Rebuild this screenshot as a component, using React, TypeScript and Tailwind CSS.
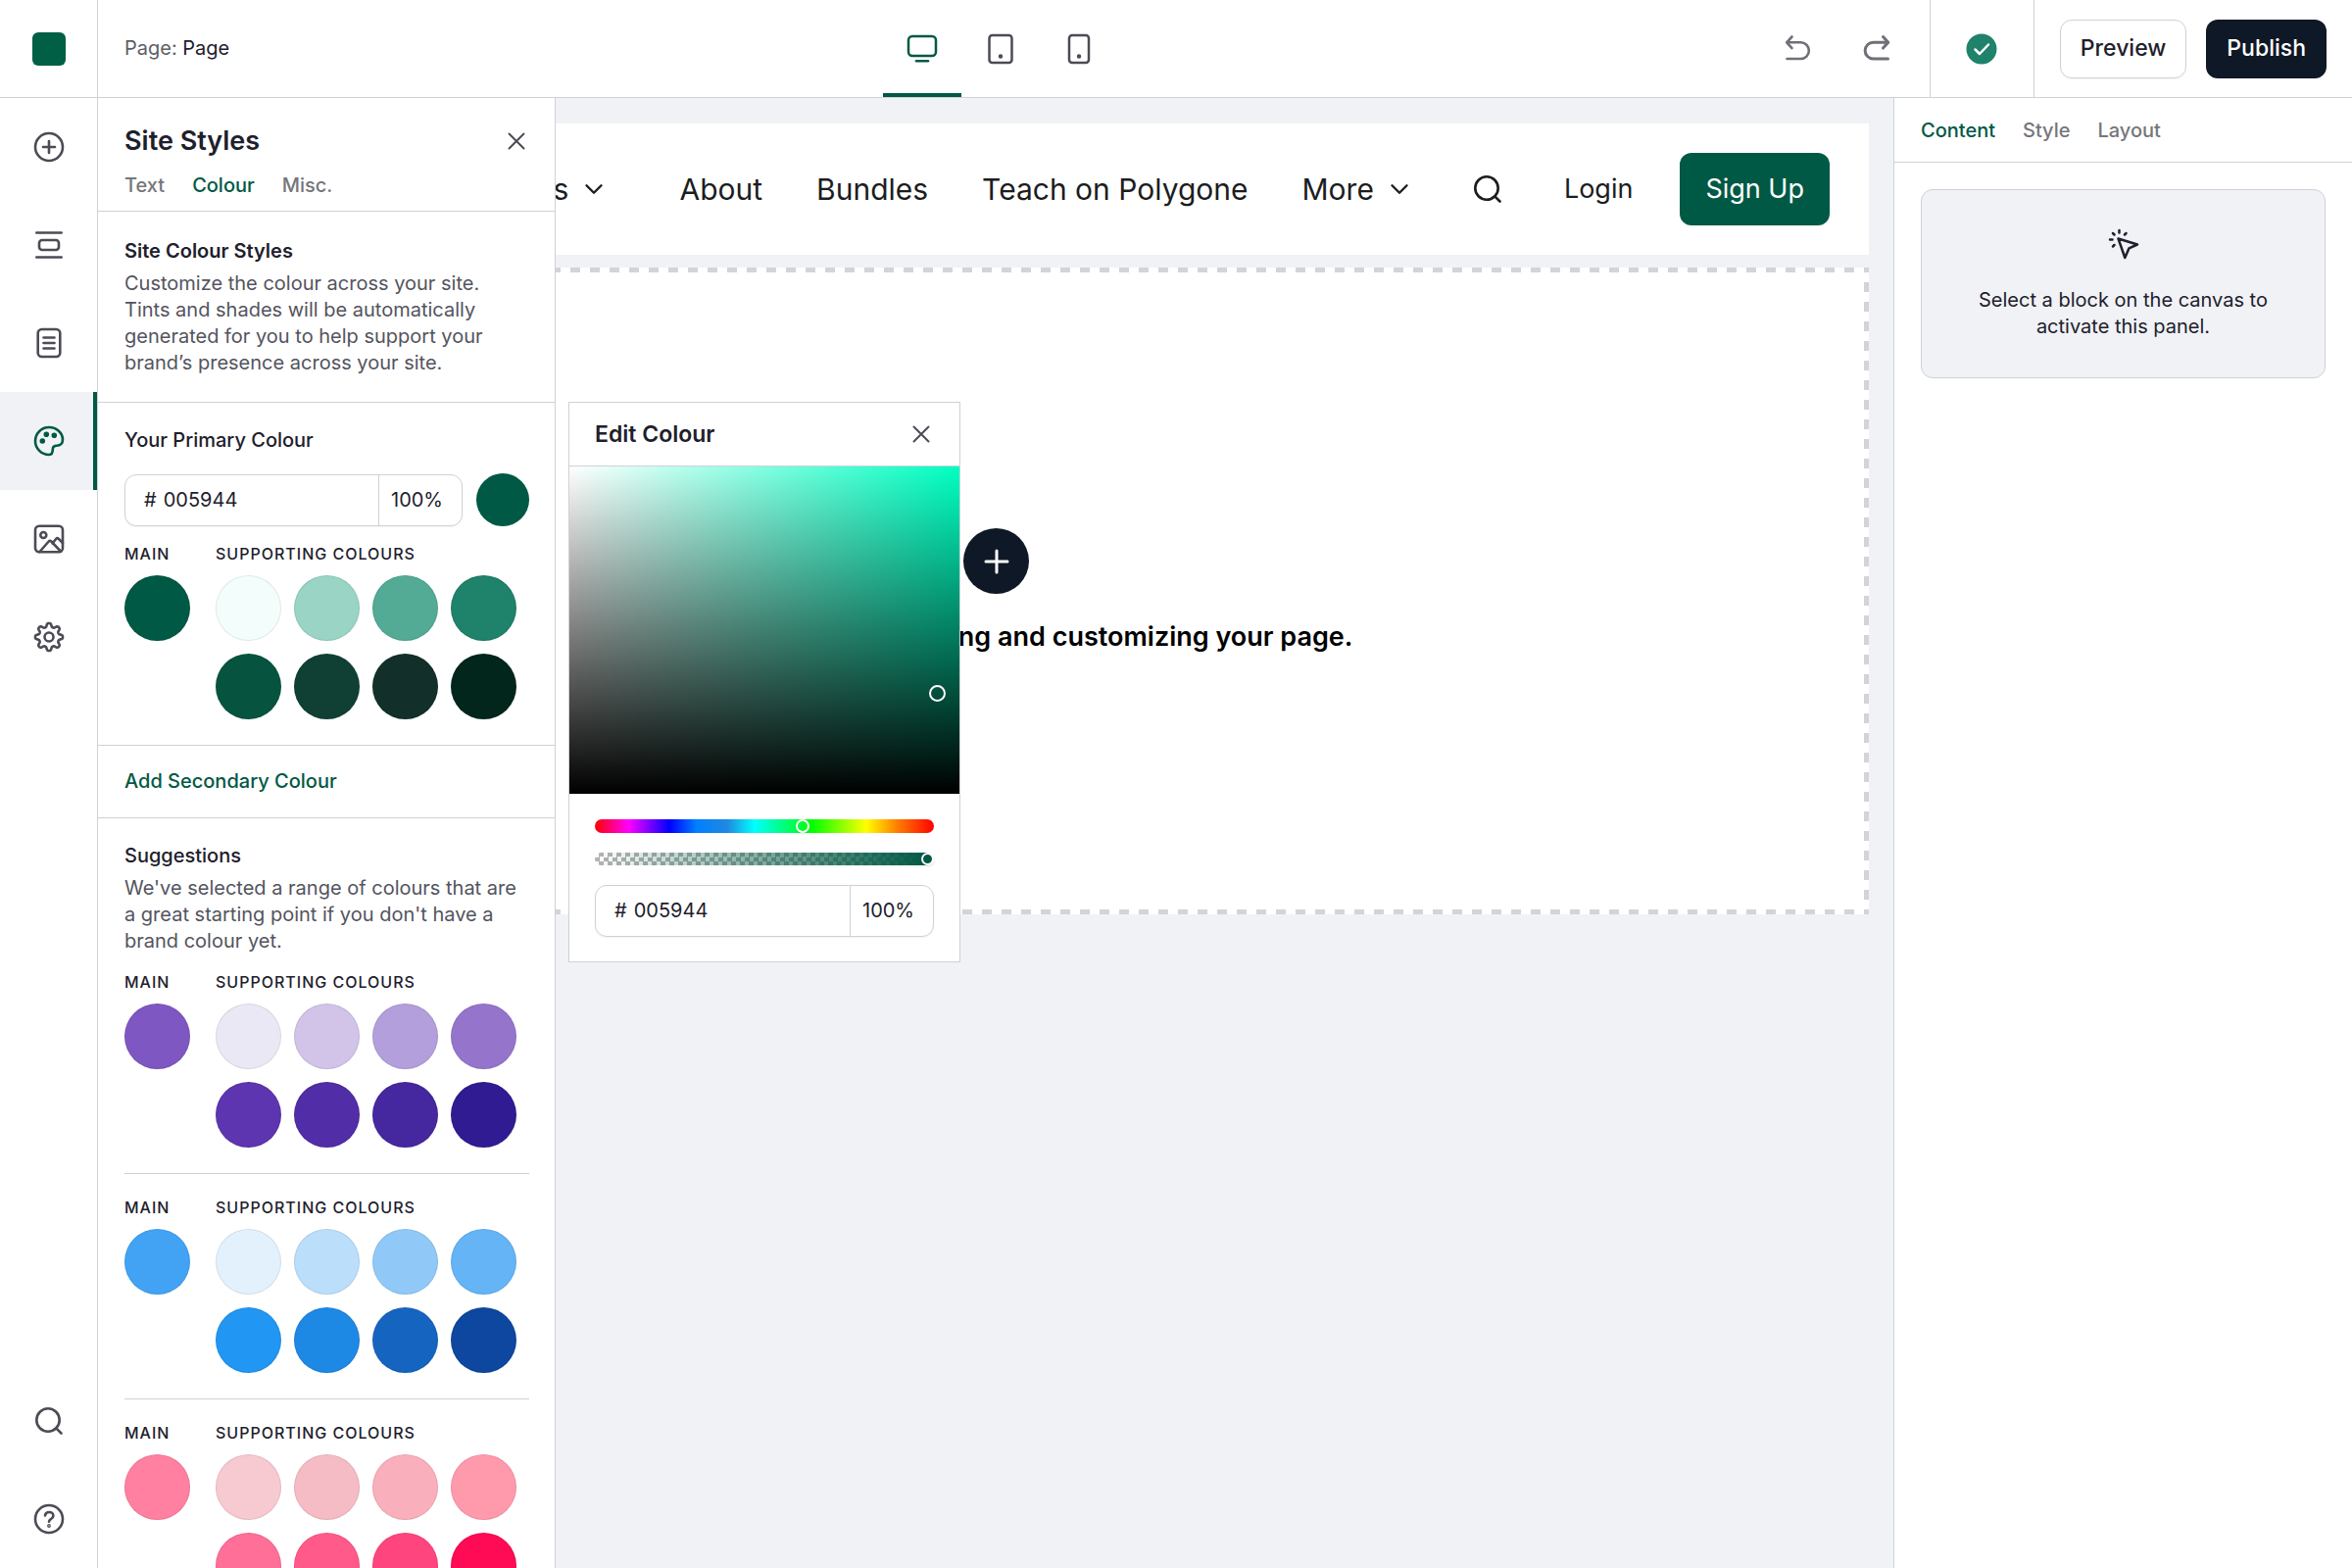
import React from "react";

const palettes = [
  {
    main: "#7e57c2",
    supporting: ["#ebe8f6", "#d1c4e8", "#b39fdb", "#9575cc", "#5e35b0", "#512da7", "#4527a0", "#311b92"],
  },
  {
    main: "#42a3f5",
    supporting: ["#e3f1fd", "#bbdefb", "#90c9f8", "#64b4f6", "#2196f3", "#1e88e5", "#1565c0", "#0d47a0"],
  },
  {
    main: "#ff80a0",
    supporting: ["#f7c9d1", "#f6bcc6", "#fab0bc", "#ff9aac", "#ff6f98", "#ff5a8a", "#ff457d", "#ff0a54"],
  },
];

const primary = {
  main: "#005944",
  supporting: ["#f3fdfb", "#99d4c4", "#53ab96", "#1f826b", "#06543f", "#0f4033", "#123029", "#02261c"],
};

// eight rounded teeth around the centre of a 32px box
const gearPath =
  Array.from({ length: 160 }, (_, i) => {
    const a = (i / 160) * Math.PI * 2;
    const r = 12.2 + 2 * Math.tanh(1.6 * Math.cos(8 * a));
    return `${i ? "L" : "M"}${(16 + r * Math.sin(a)).toFixed(2)} ${(16 - r * Math.cos(a)).toFixed(2)}`;
  }).join("") + "z";

function Icon({ size = 32, width = 2, children }: { size?: number; width?: number; children: React.ReactNode }) {
  return (
    <svg
      width={size}
      height={size}
      viewBox="0 0 32 32"
      fill="none"
      stroke="currentColor"
      strokeWidth={width}
      strokeLinecap="round"
      strokeLinejoin="round"
      aria-hidden="true"
    >
      {children}
    </svg>
  );
}

const CloseIcon = () => (
  <Icon width={2}>
    <path d="M8.5 8.5l15 15M23.5 8.5l-15 15" />
  </Icon>
);

const SearchIcon = () => (
  <Icon width={2.6}>
    <circle cx="15" cy="15" r="11.7" />
    <path d="M23.3 23.3l5.2 5.2" />
  </Icon>
);

const ChevronIcon = () => (
  <Icon size={24} width={3.2}>
    <path d="M6 11l10 10 10-10" />
  </Icon>
);

const railTop = [
  {
    name: "Add",
    icon: (
      <>
        <circle cx="16" cy="16" r="14" />
        <path d="M16 10v12M10 16h12" />
      </>
    ),
  },
  {
    name: "Sections",
    icon: (
      <>
        <path d="M3.300 3.500h25.400M3.300 28.500h25.400" />
        <rect x="6" y="11" width="20" height="10" rx="3" />
      </>
    ),
  },
  {
    name: "Pages",
    icon: (
      <>
        <rect x="4.700" y="2" width="22.600" height="28" rx="4" />
        <path d="M10.500 10.500h11M10.500 16h11M10.500 21.500h11" />
      </>
    ),
  },
  {
    name: "Site styles",
    active: true,
    icon: (
      <>
        <path d="M16 30C8.300 30 2 23.700 2 16S8.300 2 16 2s14 5.600 14 12.500c0 4-2.500 6.200-6 6.200-3 0-4.200 1.300-4.200 3.800 0 3-.8 5.500-3.800 5.500z" />
        <circle cx="9.300" cy="16" r="1.500" fill="currentColor" />
        <circle cx="13.300" cy="9.300" r="1.500" fill="currentColor" />
        <circle cx="21.300" cy="10.300" r="1.500" fill="currentColor" />
      </>
    ),
  },
  {
    name: "Media",
    icon: (
      <>
        <rect x="2" y="2.700" width="28" height="26.600" rx="4" />
        <circle cx="10.300" cy="12" r="3" />
        <path d="M6.500 29L15.700 18.500q1.300-1.400 2.600 0L28 28.700M19.500 20.500l3.800-4.700q1.200-1.300 2.400 0L30 20" />
      </>
    ),
  },
  {
    name: "Settings",
    icon: (
      <>
        <circle cx="16" cy="16" r="4.500" />
        <path d={gearPath} />
      </>
    ),
  },
];

function RailButton({ name, active, children }: { name: string; active?: boolean; children: React.ReactNode }) {
  return (
    <button
      aria-label={name}
      className={
        active
          ? "flex h-25 w-full items-center justify-center border-r-4 border-[#005944] bg-[#f0f2f6] pl-1 text-[#005944]"
          : "flex h-25 w-full items-center justify-center text-[#4b4c55]"
      }
    >
      {children}
    </button>
  );
}

function Swatch({ color }: { color: string }) {
  return (
    <button
      aria-label={color}
      className="size-[67px] rounded-full border border-black/8"
      style={{ backgroundColor: color }}
    />
  );
}

function Palette({ main, supporting }: { main: string; supporting: string[] }) {
  return (
    <div className="flex gap-[26px]">
      <div>
        <p className="mb-[10px] text-base leading-6 font-medium tracking-[1px]">MAIN</p>
        <Swatch color={main} />
      </div>
      <div>
        <p className="mb-[10px] text-base leading-6 font-medium tracking-[1px]">SUPPORTING COLOURS</p>
        <div className="grid grid-cols-4 gap-[13px]">
          {supporting.map((color) => (
            <Swatch key={color} color={color} />
          ))}
        </div>
      </div>
    </div>
  );
}

function ColourField({ id }: { id: string }) {
  return (
    <div className="flex h-[53px] min-w-0 flex-1 rounded-xl border border-[#cfd1d8] bg-white shadow-xs">
      <label htmlFor={id} className="flex items-center pl-[19px]">
        #
      </label>
      <input id={id} defaultValue="005944" className="min-w-0 flex-1 pl-[7px] outline-none" />
      <input
        aria-label="Opacity"
        defaultValue="100%"
        className="w-[85px] border-l border-[#cfd1d8] pl-3 outline-none"
      />
    </div>
  );
}

function SidePanel() {
  return (
    <aside className="absolute inset-y-0 left-0 z-10 w-[467px] border-r border-[#cfd1d8] bg-white">
      <div className="h-full overflow-hidden">
        <div className="h-[116px] border-b border-[#cfd1d8] px-[27px] pt-6">
          <div className="flex items-center justify-between">
            <h1 className="text-[27px] leading-10 font-semibold">Site Styles</h1>
            <button aria-label="Close" className="-mr-1 text-[#4b4c55]">
              <CloseIcon />
            </button>
          </div>
          <nav className="mt-[11px] flex gap-7 leading-7 font-medium text-[#75767a]">
            <a href="#text">Text</a>
            <a href="#colour" className="text-[#005944]">Colour</a>
            <a href="#misc">Misc.</a>
          </nav>
        </div>
        <section className="border-b border-[#cfd1d8] px-[27px] pt-[27px] pb-[26px]">
          <h2 className="mb-[6px] font-semibold">Site Colour Styles</h2>
          <p className="text-[#53545e]">
            Customize the colour across your site.
            <br />
            Tints and shades will be automatically
            <br />
            generated for you to help support your
            <br />
            brand’s presence across your site.
          </p>
        </section>
        <section className="border-b border-[#cfd1d8] px-[26px] pt-[25px] pb-[26px] pl-[27px]">
          <h2 className="mb-5 font-medium">Your Primary Colour</h2>
          <div className="mb-4 flex items-center gap-[14px]">
            <ColourField id="primary-hex" />
            <button aria-label="Edit colour" className="size-[54px] rounded-full bg-[#005944]" />
          </div>
          <Palette main={primary.main} supporting={primary.supporting} />
        </section>
        <div className="border-b border-[#cfd1d8] px-[27px] py-[23px]">
          <button className="block font-medium text-[#005944]">Add Secondary Colour</button>
        </div>
        <section className="px-[26px] pt-[25px] pl-[27px]">
          <h2 className="mb-[6px] font-medium">Suggestions</h2>
          <p className="mb-4 text-[#53545e]">
            We've selected a range of colours that are
            <br />
            a great starting point if you don't have a
            <br />
            brand colour yet.
          </p>
          <div className="divide-y divide-[#cfd1d8]">
            {palettes.map((palette) => (
              <div key={palette.main} className="pb-[26px] not-first:pt-[22px]">
                <Palette main={palette.main} supporting={palette.supporting} />
              </div>
            ))}
          </div>
        </section>
      </div>
      <EditColour />
    </aside>
  );
}

function EditColour() {
  return (
    <div className="absolute top-[310px] left-[480px] w-[400px] border border-[#cfd1d8] bg-white">
      <div className="flex h-[65px] items-center justify-between border-b border-[#cfd1d8] px-[26px]">
        <h2 className="text-[23px] font-semibold">Edit Colour</h2>
        <button aria-label="Close" className="-mr-[3px] text-[#4b4c55]">
          <CloseIcon />
        </button>
      </div>
      <div className="relative h-[334px] bg-[#00ffc2] bg-[linear-gradient(to_top,#000,transparent),linear-gradient(to_right,#fff,transparent)]">
        <span className="absolute right-[14px] bottom-[94px] size-[17px] rounded-full border-2 border-white" />
      </div>
      <div className="px-[26px] pt-[26px] pb-[25px]">
        <div className="relative h-[14px] rounded-full bg-[linear-gradient(to_right,#f00,#f0f_10%,#00f_22%,#0080ff_30%,#2088e0_39%,#0ff_47%,#0f0_64%,#ff0_80%,#ff8000_89%,#f00)]">
          <span className="absolute top-0 left-[61%] -ml-[6px] size-[14px] rounded-full border-2 border-white shadow" />
        </div>
        <div className="relative mt-5 mr-[6px] h-[13px] rounded-l-full bg-[linear-gradient(to_right,transparent,#005944),repeating-conic-gradient(#b3b3b3_0_25%,#fff_0_50%)] bg-[length:100%_100%,9px_9px]">
          <span className="absolute top-0 -right-[6px] size-[13px] rounded-full border-2 border-white bg-[#005944] shadow" />
        </div>
        <div className="mt-5 flex">
          <ColourField id="edit-hex" />
        </div>
      </div>
    </div>
  );
}

function TopBar() {
  return (
    <header className="flex h-25 shrink-0 border-b border-[#cfd1d8]">
      <div className="flex w-25 items-center justify-center border-r border-[#cfd1d8]">
        <span className="size-[34px] rounded-md bg-[#005f45]" />
      </div>
      <div className="flex flex-1 items-center justify-between pl-[27px]">
        <p className="pr-3 text-[#5d5e66]">
          Page: <span className="text-[#1e202c]">Page</span>
        </p>
        <div className="flex h-full text-[#4b4c55]">
          <button aria-label="Desktop" className="flex w-20 items-center justify-center border-b-4 border-[#005944] pt-1 text-[#005944]">
            <Icon width={2.5}>
              <rect x="2" y="3" width="28" height="20" rx="4" />
              <path d="M10 28.300h12" />
            </Icon>
          </button>
          <button aria-label="Tablet" className="flex w-20 items-center justify-center">
            <Icon width={2.5}>
              <rect x="4.500" y="2" width="23" height="28" rx="3" />
              <circle cx="16" cy="23.500" r="1" fill="currentColor" />
            </Icon>
          </button>
          <button aria-label="Phone" className="flex w-20 items-center justify-center">
            <Icon width={2.5}>
              <rect x="6" y="2" width="20" height="28" rx="3" />
              <circle cx="16" cy="23.500" r="1" fill="currentColor" />
            </Icon>
          </button>
        </div>
        <div className="flex h-full">
          <div className="flex pr-[14px] text-[#6f7078]">
            <button aria-label="Undo" className="flex w-20 items-center justify-center">
              <Icon width={2.6}>
                <path d="M9.500 3.500L4.200 9.300l5.300 5.800M4.200 9.300h14.300a8.350 8.350 0 0 1 0 16.700H4.500" />
              </Icon>
            </button>
            <button aria-label="Redo" className="flex w-20 items-center justify-center">
              <Icon width={3}>
                <path d="M22.500 3.500l5.300 5.800-5.300 5.800M27.800 9.300H12.500a8.350 8.350 0 0 0 0 16.700H27.500" />
              </Icon>
            </button>
          </div>
          <div className="flex w-[107px] items-center justify-center border-x border-[#cfd1d8]">
            <svg width="32" height="32" viewBox="0 0 32 32" fill="none" role="img" aria-label="Saved">
              <circle cx="16" cy="16" r="15.500" fill="#1f826b" />
              <path d="M9.500 16.500l4.500 4.500 9-9.500" stroke="#fff" strokeWidth="2.500" strokeLinecap="round" strokeLinejoin="round" />
            </svg>
          </div>
          <div className="flex items-center gap-5 px-[26px] text-[23px] font-medium">
            <button className="h-15 rounded-xl border border-[#cfd1d8] px-5 shadow-xs">Preview</button>
            <button className="h-15 rounded-xl bg-[#0f1826] px-[21px] text-white">Publish</button>
          </div>
        </div>
      </div>
    </header>
  );
}

const dash = {
  row: "h-[5px] bg-[repeating-linear-gradient(to_left,#d2d4d9_0_5px,transparent_5px_15px,#d2d4d9_15px_20px)]",
  column: "w-[5px] bg-[repeating-linear-gradient(to_bottom,transparent_0_10px,#d2d4d9_10px_20px)]",
};

function Canvas() {
  return (
    <main className="flex-1 overflow-hidden bg-[#f0f2f6] pt-[26px] pr-[25px] pl-[27px]">
      <div className="flex h-[134px] items-center justify-end bg-white pr-10 text-3xl whitespace-nowrap text-[#1c1d1f]">
        <nav className="flex items-center gap-[55px]">
          <a href="#courses" className="flex items-center gap-[14px]">
            Courses <ChevronIcon />
          </a>
          <a href="#about" className="ml-5">About</a>
          <a href="#bundles">Bundles</a>
          <a href="#teach">Teach on Polygone</a>
          <a href="#more" className="flex items-center gap-[14px]">
            More <ChevronIcon />
          </a>
        </nav>
        <button aria-label="Search" className="mx-[62px]">
          <SearchIcon />
        </button>
        <a href="#login" className="text-[27px]">Login</a>
        <button className="ml-12 h-[74px] rounded-xl bg-[#005944] px-[26px] text-[27px] text-white">Sign Up</button>
      </div>
      <div className="mt-[13px] flex h-[660px] flex-col bg-white text-black">
        <div className={dash.row} />
        <div className="flex flex-1 justify-between">
          <div className={dash.column} />
          <div className="flex flex-col items-center pt-[261px]">
            <button aria-label="Add block" className="flex size-[67px] items-center justify-center rounded-full bg-[#0f1826] text-white">
              <Icon width={3}>
                <path d="M16 5v22M5 16h22" />
              </Icon>
            </button>
            <p className="mt-7 text-[27px] leading-8 font-semibold">Add blocks to start building and customizing your page.</p>
          </div>
          <div className={dash.column} />
        </div>
        <div className={dash.row} />
      </div>
    </main>
  );
}

function Inspector() {
  return (
    <aside className="w-[468px] shrink-0 border-l border-[#cfd1d8]">
      <nav className="flex h-[66px] items-center gap-7 border-b border-[#cfd1d8] px-[27px] pt-0.5 font-medium text-[#75767a]">
        <a href="#content" className="text-[#005944]">Content</a>
        <a href="#style">Style</a>
        <a href="#layout">Layout</a>
      </nav>
      <div className="mx-[27px] mt-[27px] flex h-[193px] flex-col items-center rounded-xl border border-[#cfd1d8] bg-[#f0f2f6] pt-[39px] text-center">
        <Icon width={2.5}>
          <path d="M10.500 10.500L30 16.500l-8.500 3.800-4.200 9.700z" />
          <path d="M11.500 2v2.500M2 11.500h2.500M5 5l1.500 1.500M18.500 5L17 6.500M5 18.500L6.500 17" />
        </Icon>
        <p className="mt-7">
          Select a block on the canvas to
          <br />
          activate this panel.
        </p>
      </div>
    </aside>
  );
}

export default function App() {
  return (
    <div className="flex h-screen flex-col overflow-hidden bg-white font-[Inter,sans-serif] text-xl leading-[27px] text-[#1e202c]">
      <TopBar />
      <div className="flex min-h-0 flex-1">
        <nav className="flex w-25 shrink-0 flex-col justify-between border-r border-[#cfd1d8]">
          <div>
            {railTop.map((item) => (
              <RailButton key={item.name} name={item.name} active={item.active}>
                <Icon width={2.6}>{item.icon}</Icon>
              </RailButton>
            ))}
          </div>
          <div>
            <RailButton name="Search">
              <SearchIcon />
            </RailButton>
            <RailButton name="Help">
              <Icon width={2.6}>
                <circle cx="16" cy="16" r="14" />
                <path d="M12 12.500c.3-2.300 2-3.500 4.200-3.500 2.400 0 4.200 1.500 4.200 3.700 0 3.300-4.400 3.300-4.400 6" />
                <circle cx="16" cy="23" r=".6" fill="currentColor" />
              </Icon>
            </RailButton>
          </div>
        </nav>
        <div className="relative flex min-w-0 flex-1">
          <Canvas />
          <Inspector />
          <SidePanel />
        </div>
      </div>
    </div>
  );
}
